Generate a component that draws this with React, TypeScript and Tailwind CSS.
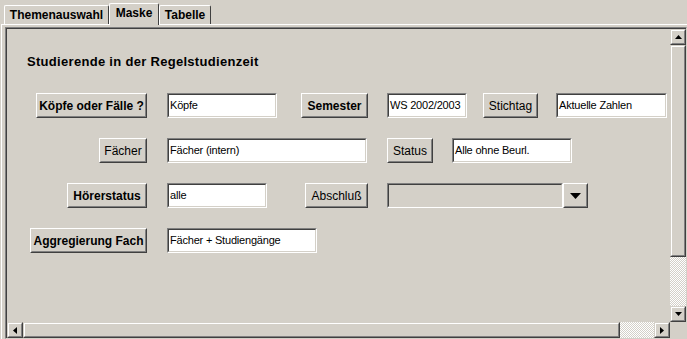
import type { ReactNode } from "react";

const Raised = ({ className = "", children }: { className?: string; children?: ReactNode }) => (
  <div className={`border border-t-white border-l-white border-r-[#404040] border-b-[#404040] ${className}`}>
    <div className="w-full h-full flex items-center justify-center border border-t-[#d4d0c8] border-l-[#d4d0c8] border-r-[#808080] border-b-[#808080]">
      {children}
    </div>
  </div>
);

const Button = ({ w, bold, children }: { w: string; bold?: boolean; children: ReactNode }) => (
  <Raised className={`${w} h-[25px] shrink-0`}>
    <span className={`text-[12px] leading-none text-black whitespace-nowrap ${bold ? "font-bold" : ""}`}>
      {children}
    </span>
  </Raised>
);

const Field = ({ w, value, disabled }: { w: string; value?: string; disabled?: boolean }) => (
  <div className={`${w} h-[25px] shrink-0 border border-t-[#808080] border-l-[#808080] border-r-white border-b-white`}>
    <div
      className={`h-full flex items-center overflow-hidden px-[1px] text-[11px] tracking-[-0.2px] text-black whitespace-nowrap border border-t-[#404040] border-l-[#404040] border-r-[#d4d0c8] border-b-[#d4d0c8] ${
        disabled ? "bg-[#d4d0c8]" : "bg-white"
      }`}
    >
      {value}
    </div>
  </div>
);

const Arrow = ({ dir, size = "small" }: { dir: "up" | "down" | "left" | "right"; size?: "small" | "big" }) => {
  const pts = {
    up: "0,4 7,4 3.5,0",
    down: "0,0 7,0 3.5,4",
    left: "4,0 4,7 0,3.5",
    right: "0,0 0,7 4,3.5",
  }[dir];
  if (size === "big") {
    return (
      <svg width="11" height="6" viewBox="0 0 11 6">
        <polygon points="0,0 11,0 5.5,6" fill="#000" />
      </svg>
    );
  }
  const horiz = dir === "up" || dir === "down";
  return (
    <svg width={horiz ? 7 : 4} height={horiz ? 4 : 7} viewBox={horiz ? "0 0 7 4" : "0 0 4 7"}>
      <polygon points={pts} fill="#000" />
    </svg>
  );
};

const ScrollPart = ({ className = "", children }: { className?: string; children?: ReactNode }) => (
  <div className={`border border-t-[#d4d0c8] border-l-[#d4d0c8] border-r-[#404040] border-b-[#404040] ${className}`}>
    <div className="w-full h-full flex items-center justify-center border border-t-white border-l-white border-r-[#808080] border-b-[#808080]">
      {children}
    </div>
  </div>
);

const Track = ({ className = "" }: { className?: string }) => (
  <div
    className={`bg-[image:repeating-conic-gradient(#ffffff_0%_25%,#d4d0c8_0%_50%)] bg-size-[2px_2px] ${className}`}
  />
);

const Tab = ({ label, active, w }: { label: string; active?: boolean; w: string }) => (
  <div
    className={`${w} ${
      active ? "h-[22px] relative z-10 -mb-[1px] pb-[3px] bg-[#d4d0c8]" : "h-[19px]"
    } flex items-center justify-center rounded-t-[2px] border-t border-l border-t-white border-l-white border-r border-r-[#404040]`}
  >
    <span className="text-[12px] font-bold text-black leading-none">{label}</span>
  </div>
);

export default function App() {
  return (
    <div className="w-[687px] h-[339px] bg-[#d4d0c8] overflow-hidden flex flex-col font-['Liberation_Sans',Arial,sans-serif]">
      {/* Tabs */}
      <div className="h-[24px] flex items-end pl-[4px] shrink-0">
        <Tab label="Themenauswahl" w="w-[105px]" />
        <Tab label="Maske" w="w-[50px]" active />
        <Tab label="Tabelle" w="w-[52px]" />
      </div>

      {/* Tab body */}
      <div className="flex-1 ml-[1px] border-t border-l border-white pl-[3px] pt-[2px]">
        <div className="w-[682px] h-[312px] border border-t-[#808080] border-l-[#808080] border-r-[#d4d0c8] border-b-[#d4d0c8]">
          <div className="border-t border-l border-[#404040] grid grid-cols-[663px_16px] grid-rows-[293px_16px]">
            {/* Viewport */}
            <div className="overflow-hidden">
              <h1 className="pl-[20px] pt-[25px] text-[13px] leading-[15px] font-bold text-black tracking-[0.3px]">
                Studierende in der Regelstudienzeit
              </h1>

              <div className="mt-[24px] flex flex-col gap-[20px]">
                <div className="flex items-center">
                  <div className="w-[140px] flex justify-end">
                    <Button w="w-[111px]" bold>Köpfe oder Fälle ?</Button>
                  </div>
                  <div className="w-[201px] ml-[20px] flex justify-between">
                    <Field w="w-[110px]" value="Köpfe" />
                    <Button w="w-[67px]" bold>Semester</Button>
                  </div>
                  <div className="ml-[19px] flex">
                    <Field w="w-[80px]" value="WS 2002/2003" />
                    <div className="ml-[16px]">
                      <Button w="w-[55px]">Stichtag</Button>
                    </div>
                    <div className="ml-[18px]">
                      <Field w="w-[111px]" value="Aktuelle Zahlen" />
                    </div>
                  </div>
                </div>

                <div className="flex items-center">
                  <div className="w-[140px] flex justify-end">
                    <Button w="w-[48px]">Fächer</Button>
                  </div>
                  <div className="w-[201px] ml-[20px] flex">
                    <Field w="w-[200px]" value="Fächer (intern)" />
                  </div>
                  <div className="ml-[19px] flex">
                    <Button w="w-[46px]">Status</Button>
                    <div className="ml-[19px]">
                      <Field w="w-[120px]" value="Alle ohne Beurl." />
                    </div>
                  </div>
                </div>

                <div className="flex items-center">
                  <div className="w-[140px] flex justify-end">
                    <Button w="w-[80px]" bold>Hörerstatus</Button>
                  </div>
                  <div className="w-[201px] ml-[20px] flex justify-between">
                    <Field w="w-[100px]" value="alle" />
                    <Button w="w-[63px]">Abschluß</Button>
                  </div>
                  <div className="ml-[19px] flex">
                    <Field w="w-[176px]" disabled />
                    <Raised className="w-[25px] h-[25px]">
                      <Arrow dir="down" size="big" />
                    </Raised>
                  </div>
                </div>

                <div className="flex items-center">
                  <div className="w-[140px] flex justify-end">
                    <Button w="w-[117px]" bold>Aggregierung Fach</Button>
                  </div>
                  <div className="ml-[20px] flex">
                    <Field w="w-[150px]" value="Fächer + Studiengänge" />
                  </div>
                </div>
              </div>
            </div>

            {/* Vertical scrollbar */}
            <div className="flex flex-col">
              <ScrollPart className="h-[16px] shrink-0">
                <Arrow dir="up" />
              </ScrollPart>
              <ScrollPart className="h-[212px] shrink-0" />
              <Track className="flex-1" />
              <ScrollPart className="h-[16px] shrink-0">
                <Arrow dir="down" />
              </ScrollPart>
            </div>

            {/* Horizontal scrollbar */}
            <div className="flex">
              <ScrollPart className="w-[16px] shrink-0">
                <Arrow dir="left" />
              </ScrollPart>
              <ScrollPart className="w-[597px] shrink-0" />
              <Track className="flex-1" />
              <ScrollPart className="w-[16px] shrink-0">
                <Arrow dir="right" />
              </ScrollPart>
            </div>

            <div className="bg-[#d4d0c8]" />
          </div>
        </div>
      </div>
    </div>
  );
}
